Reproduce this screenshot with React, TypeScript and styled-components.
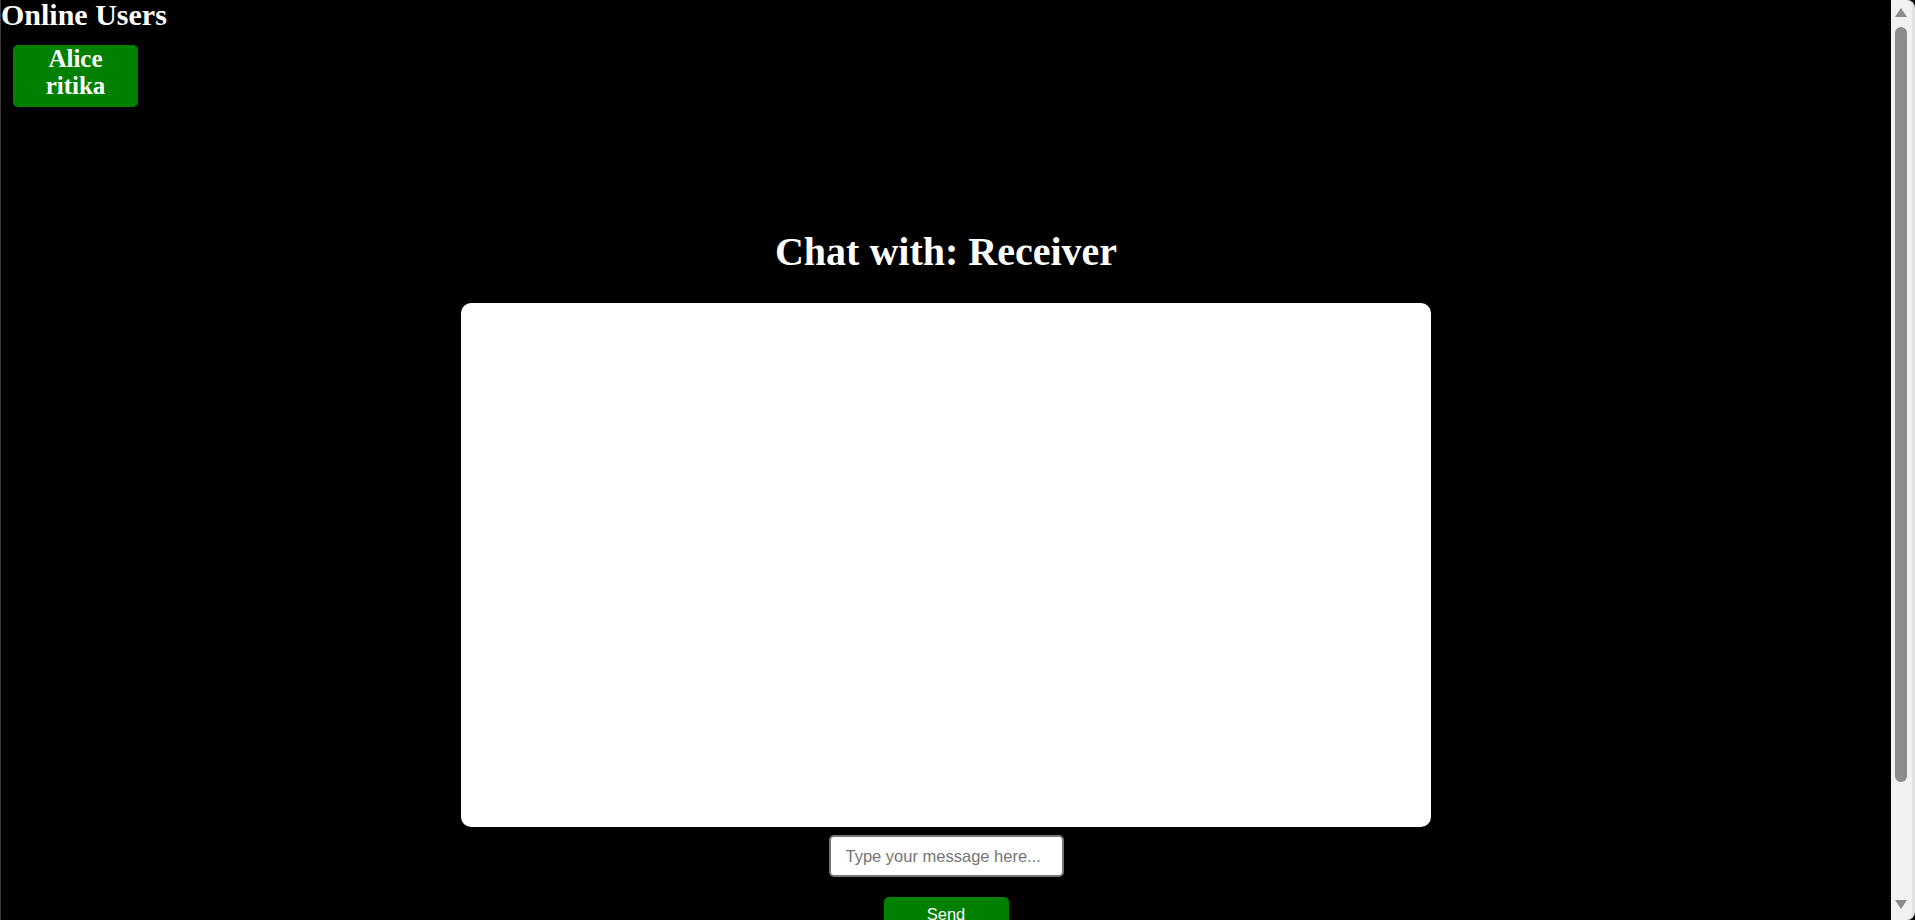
import React from "react";
import styled, { createGlobalStyle } from "styled-components";

const GlobalStyle = createGlobalStyle`
  html, body {
    margin: 0;
    padding: 0;
    background: #000;
    overflow: hidden;
  }
  body {
    font-family: "Liberation Serif", "Times New Roman", serif;
  }
`;

const Page = styled.div`
  box-sizing: border-box;
  min-height: 1067px;
  padding-right: 24px;
  background: #000;
  border-left: 1px solid #3c3c3c;
  display: flex;
  flex-direction: column;
`;

const Sidebar = styled.aside`
  display: flex;
  flex-direction: column;
  align-items: flex-start;
`;

const SidebarTitle = styled.h2`
  margin: 0;
  font-size: 30px;
  line-height: 30px;
  font-weight: bold;
  color: #fff;
`;

const UserList = styled.div`
  margin: 15px 0 0 12px;
  width: 125px;
  box-sizing: border-box;
  padding: 0 0 8px;
  background: #008000;
  border-radius: 5px;
  display: flex;
  flex-direction: column;
  align-items: center;
`;

const UserName = styled.div`
  color: #fff;
  font-size: 25px;
  line-height: 27px;
  font-weight: bold;
`;

const ChatSection = styled.main`
  display: flex;
  flex-direction: column;
  align-items: center;
`;

const ChatTitle = styled.h1`
  margin: 122px 0 0;
  font-size: 40px;
  line-height: 46px;
  font-weight: bold;
  color: #fff;
`;

const MessagesBox = styled.div`
  margin-top: 28px;
  width: 970px;
  height: 524px;
  background: #fff;
  border-radius: 10px;
`;

const MessageInput = styled.input`
  margin-top: 8px;
  box-sizing: border-box;
  width: 235px;
  height: 42px;
  padding: 0 15px;
  border: 2px solid #767676;
  border-radius: 5px;
  background: #fff;
  font-family: "Liberation Sans", Arial, sans-serif;
  font-size: 16.5px;
  color: #000;
  outline: none;
  &::placeholder {
    color: #757575;
  }
`;

const SendButton = styled.button`
  margin-top: 20px;
  width: 125px;
  padding: 8px 0;
  border: none;
  border-radius: 5px;
  background: #008000;
  color: #fff;
  font-family: "Liberation Sans", Arial, sans-serif;
  font-size: 16.5px;
  line-height: 19px;
  cursor: pointer;
`;

/* Browser scrollbar, overlaid at the right edge of the viewport */
const ScrollBar = styled.div`
  position: fixed;
  top: 0;
  right: 0;
  width: 24px;
  height: 100vh;
  box-sizing: border-box;
  background: #f1f1f1;
  border-right: 3px solid #e2e2e2;
  border-top-right-radius: 8px;
  border-bottom-right-radius: 8px;
  display: flex;
  flex-direction: column;
  align-items: flex-start;
  padding-left: 4px;
`;

const ArrowBox = styled.div<{ $down?: boolean }>`
  height: 24px;
  width: 12px;
  display: flex;
  justify-content: center;
  align-items: ${(p) => (p.$down ? "flex-start" : "flex-end")};
  padding: ${(p) => (p.$down ? "4px 0 0" : "0 0 7px")};
  box-sizing: border-box;
`;

const Triangle = styled.div<{ $down?: boolean }>`
  width: 0;
  height: 0;
  border-left: 6px solid transparent;
  border-right: 6px solid transparent;
  ${(p) =>
    p.$down
      ? "border-top: 9px solid #8b8b8b;"
      : "border-bottom: 9px solid #8b8b8b;"}
`;

const Track = styled.div`
  flex: 1;
  width: 12px;
  padding-top: 3px;
  box-sizing: border-box;
`;

const Thumb = styled.div`
  width: 12px;
  height: 755px;
  background: #8b8b8b;
  border-radius: 6px;
`;

const users = ["Alice", "ritika"];

export default function App() {
  return (
    <>
      <GlobalStyle />
      <Page>
        <Sidebar>
          <SidebarTitle>Online Users</SidebarTitle>
          <UserList>
            {users.map((u) => (
              <UserName key={u}>{u}</UserName>
            ))}
          </UserList>
        </Sidebar>
        <ChatSection>
          <ChatTitle>Chat with: Receiver</ChatTitle>
          <MessagesBox />
          <MessageInput type="text" placeholder="Type your message here..." />
          <SendButton>Send</SendButton>
        </ChatSection>
      </Page>
      <ScrollBar>
        <ArrowBox>
          <Triangle />
        </ArrowBox>
        <Track>
          <Thumb />
        </Track>
        <ArrowBox $down>
          <Triangle $down />
        </ArrowBox>
      </ScrollBar>
    </>
  );
}
